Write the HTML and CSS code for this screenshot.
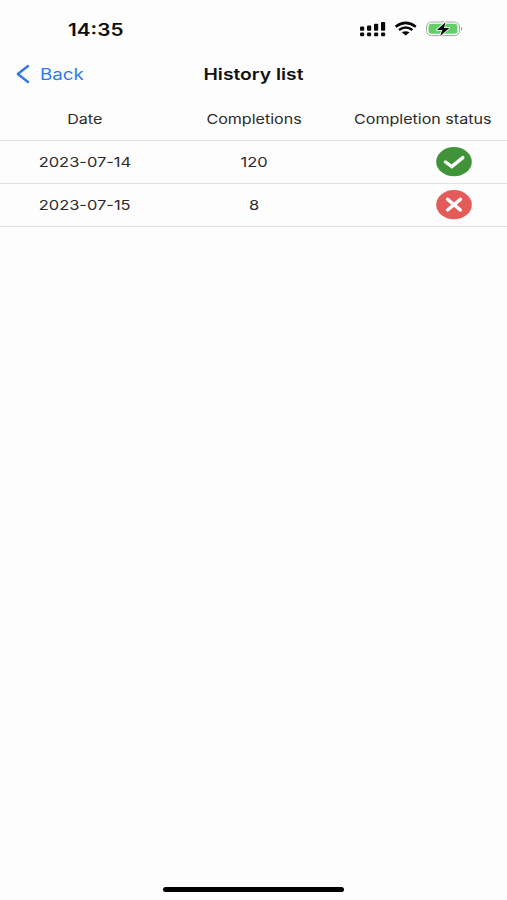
FILE: index.html
```html
<!DOCTYPE html>
<html lang="en">
<head>
<meta charset="utf-8">
<title>History list</title>
<link rel="stylesheet" href="styles.css">
</head>
<body>
<div class="screen">
  <header class="status-bar">
    <span class="time"><span class="wide">14:35</span></span>
    <svg class="status-icons" width="106" height="20" viewBox="0 0 106 20" aria-hidden="true">
      <g fill="#080808">
        <rect x="1" y="6.5" width="4.2" height="4.3" rx="1"/><rect x="8" y="5.5" width="4.2" height="5.3" rx="1"/><rect x="15" y="3.7" width="4.2" height="7.1" rx="1"/><rect x="22" y="2" width="4.2" height="8.8" rx="1"/>
        <rect x="1" y="12.5" width="4.2" height="3.7" rx="1.2"/><rect x="8" y="12.5" width="4.2" height="3.7" rx="1.2"/><rect x="15" y="12.5" width="4.2" height="3.7" rx="1.2"/><rect x="22" y="12.5" width="4.2" height="3.7" rx="1.2"/>
        <path d="M42.8 12.3Q46.7 10.1 50.6 12.3L46.7 15.6Z"/>
      </g>
      <path d="M36.6 6.7Q46.7-.9 56.8 6.7M40 10Q46.7 5 53.4 10" fill="none" stroke="#080808" stroke-width="2.5"/>
      <rect x="67.5" y="2" width="33" height="13.6" rx="5" fill="#fff" stroke="#a6a6a6"/>
      <rect x="69.5" y="3.8" width="29" height="10" rx="3.2" fill="#63cf68"/>
      <path d="M102 6.5Q104.5 8.8 102 11.1Z" fill="#999"/>
      <path d="M86.5 2.2 77.8 9.9h5.4l-2 6.1 9.2-8h-5.4Z" fill="#080808" stroke="#fff" stroke-width="1.6" paint-order="stroke" stroke-linejoin="round"/>
    </svg>
  </header>
  <nav class="nav-bar">
    <a class="back">
      <svg width="15" height="20" viewBox="0 0 15 20" aria-hidden="true"><path d="M13 2 2.8 10 13 18" fill="none" stroke="#2f78ee" stroke-width="2.4" stroke-linecap="round" stroke-linejoin="round"/></svg>
      <span class="wide">Back</span>
    </a>
    <h1 class="title"><span class="wide">History list</span></h1>
  </nav>
  <main class="history">
    <div class="row head">
      <div class="cell"><span class="wide">Date</span></div>
      <div class="cell"><span class="wide">Completions</span></div>
      <div class="cell"><span class="wide">Completion status</span></div>
    </div>
    <div class="row">
      <div class="cell"><span class="wide">2023-07-14</span></div>
      <div class="cell"><span class="wide">120</span></div>
      <div class="cell status"><svg width="36" height="30" viewBox="0 0 36 30" role="img" aria-label="Completed"><ellipse cx="18" cy="14.7" rx="17.8" ry="14.6" fill="#409338"/><path d="m9.5 15 6.3 4.6L26.8 10.6" fill="none" stroke="#fff" stroke-width="3.4" stroke-linecap="round"/></svg></div>
    </div>
    <div class="row">
      <div class="cell"><span class="wide">2023-07-15</span></div>
      <div class="cell"><span class="wide">8</span></div>
      <div class="cell status"><svg width="36" height="30" viewBox="0 0 36 30" role="img" aria-label="Not completed"><ellipse cx="18" cy="14.7" rx="17.8" ry="14.6" fill="#e35c59"/><path d="m11.6 9.4 12.8 10.6m0-10.6L11.6 20" fill="none" stroke="#fff" stroke-width="3.4" stroke-linecap="round"/></svg></div>
    </div>
  </main>
  <div class="home-indicator"></div>
</div>
</body>
</html>
```
FILE: styles.css
```css
* { box-sizing: border-box; }

body {
  margin: 0;
  background: #fdfdfd;
  color: #2b2b2b;
  font-family: Inter, "Liberation Sans", sans-serif;
}

.screen {
  display: flex;
  flex-direction: column;
  height: 900px;
  overflow: hidden;
}

/* Horizontally extended lettering */
.wide {
  display: inline-block;
  white-space: nowrap;
  transform: scaleX(1.22);
}

.status-bar {
  display: flex;
  align-items: center;
  justify-content: space-between;
  height: 58px;
  padding: 0 42px 0 68px;
}

.time {
  padding-top: 2px;
  color: #0b0b0b;
  font-size: 17px;
  font-weight: 600;
}

.time .wide,
.back .wide { transform-origin: left; }

.back .wide { transform: scaleX(1.17); }

.title .wide { transform: scaleX(1.205); }

.status-icons { margin-top: 2px; }

.nav-bar {
  display: grid;
  grid-template-columns: 1fr auto 1fr;
  align-items: center;
  height: 32px;
  padding: 0 16px 0 15px;
}

.back {
  display: flex;
  align-items: center;
  gap: 10px;
  color: #2f78ee;
  font-size: 16px;
}

.title {
  margin: 0;
  color: #111;
  font-size: 16px;
  font-weight: 600;
}

.row {
  display: grid;
  grid-template-columns: 170px 168px 169px;
  align-items: center;
  height: 43px;
  border-bottom: 1px solid #e2e2e2;
  font-size: 13.5px;
}

.head { height: 51px; padding-top: 8px; }

.head .wide { transform: scaleX(1.19); }

.cell {
  display: flex;
  justify-content: center;
}

.status { padding-left: 63px; }

.home-indicator {
  width: 181px;
  height: 5px;
  margin: auto auto 8px;
  border-radius: 3px;
  background: #000;
}
```
